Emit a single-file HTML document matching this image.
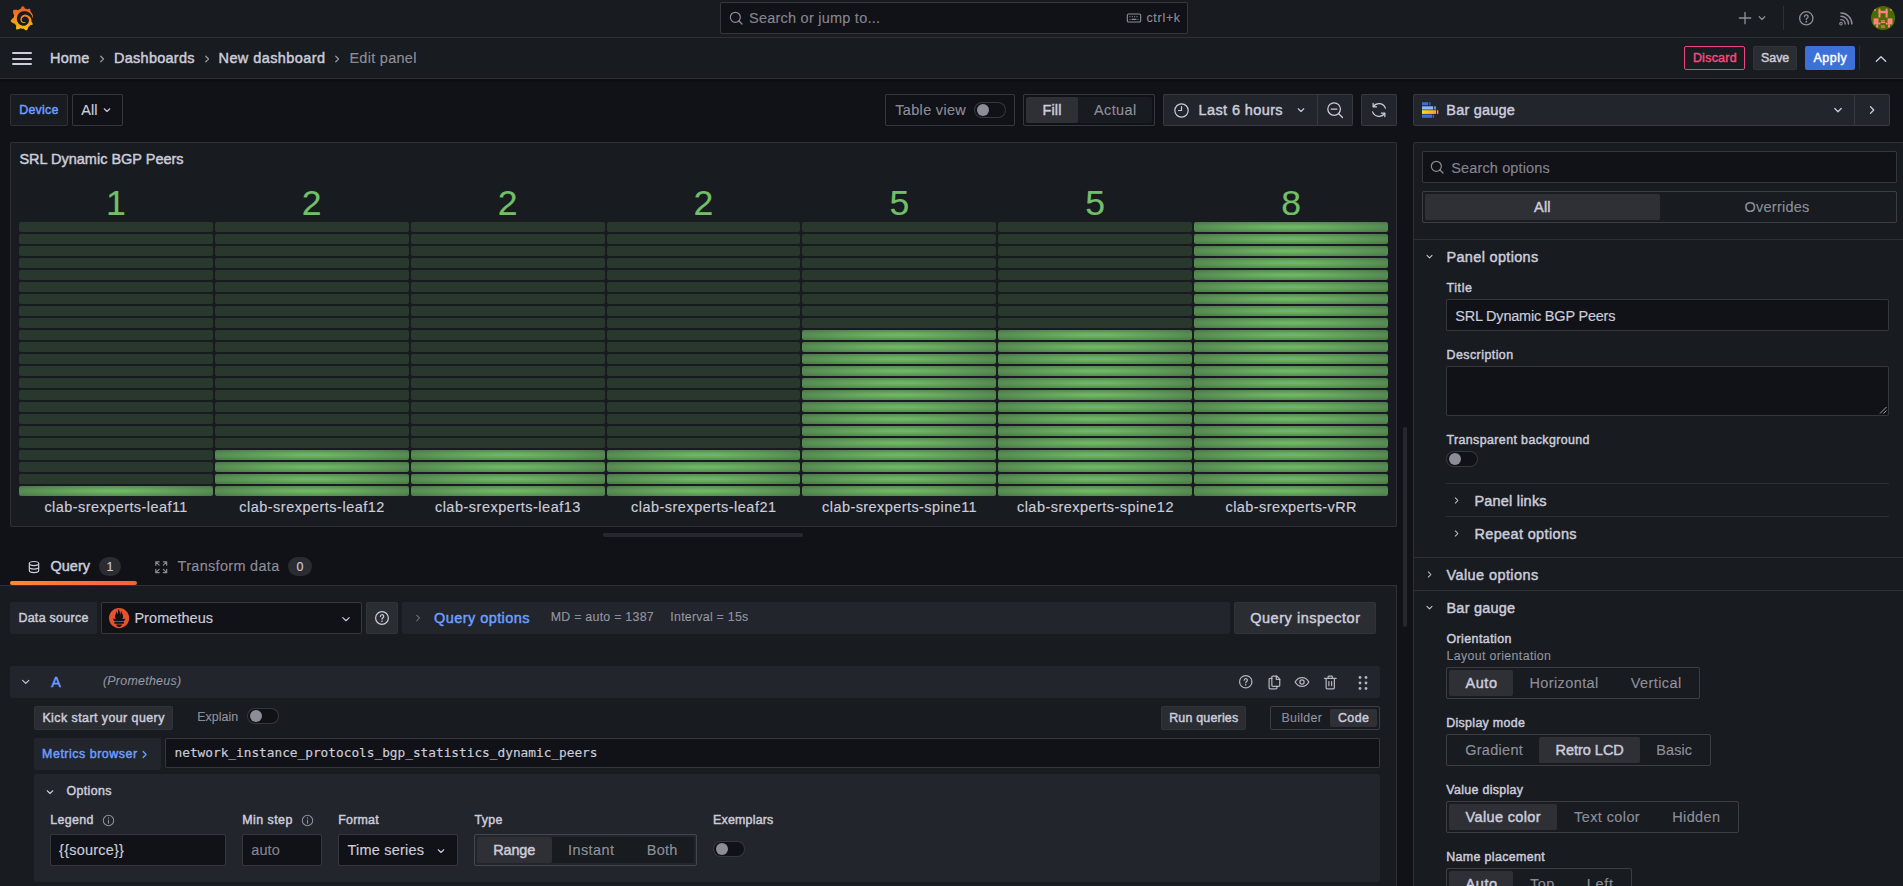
<!DOCTYPE html>
<html lang="en"><head><meta charset="utf-8"><title>Edit panel - New dashboard - Dashboards - Grafana</title><style>
html,body{margin:0;padding:0;background:#111217;overflow:hidden}
body{width:1903px;height:886px;position:relative;font-family:"Liberation Sans", sans-serif;color:rgb(204,204,220);-webkit-font-smoothing:antialiased}
.b{position:absolute;box-sizing:border-box}
.t{position:absolute;white-space:nowrap;line-height:20px;height:20px;display:block}
.i{position:absolute;display:block;overflow:visible}
.c{position:absolute;border-radius:2px}
</style></head><body>
<div class="b" style="left:0px;top:0px;width:1903px;height:38px;background:#181b1f;border-bottom:1px solid rgba(204,204,220,0.12);"></div>
<div class="b" style="left:0px;top:38px;width:1903px;height:41px;background:#181b1f;border-bottom:1px solid rgba(204,204,220,0.12);"></div>
<div class="b" style="left:0px;top:79px;width:1903px;height:4px;background:linear-gradient(rgba(0,0,0,0.35),rgba(0,0,0,0));"></div>
<svg class="i" style="left:10.1px;top:5.7px" width="23.66" height="24.6" viewBox="0 0 351 365"><defs><linearGradient id="gl" gradientUnits="userSpaceOnUse" x1="175" y1="30" x2="175" y2="375"><stop offset="0" stop-color="#F05A28"/><stop offset="1" stop-color="#FBCA0A"/></linearGradient></defs><path fill="url(#gl)" d="M342,161.2c-0.6-6.1-1.6-13.1-3.6-20.9c-2-7.700-5-16.200-9.400-25c-4.400-8.800-10.100-17.900-17.500-26.800c-2.900-3.500-6.100-6.900-9.500-10.200c5.100-20.300-6.200-37.900-6.200-37.900c-19.500-1.200-31.900,6.100-36.500,9.400c-0.800-0.300-1.500-0.700-2.300-1c-3.300-1.300-6.700-2.600-10.300-3.700c-3.500-1.100-7.100-2.100-10.800-3c-3.700-0.900-7.400-1.600-11.200-2.200c-0.700-0.100-1.300-0.200-2-0.300c-8.500-27.200-32.900-38.600-32.900-38.600c-27.300,17.300-32.400,41.500-32.400,41.500s-0.100,0.500-0.300,1.400c-1.500,0.400-3,0.900-4.500,1.300c-2.100,0.600-4.200,1.400-6.200,2.200c-2.100,0.800-4.100,1.600-6.200,2.500c-4.100,1.800-8.200,3.800-12.200,6c-3.900,2.200-7.700,4.600-11.400,7.100c-0.500-0.200-1-0.400-1-0.400c-37.800-14.400-71.300,2.900-71.300,2.900c-3.100,40.200,15.100,65.500,18.700,70.100c-0.900,2.500-1.700,5-2.500,7.500c-2.800,9.100-4.900,18.400-6.200,28.100c-0.200,1.400-0.400,2.800-0.500,4.200C18.800,192.700,8.500,228,8.500,228c29.100,33.500,63.100,35.600,63.100,35.600c0,0,0.100-0.100,0.100-0.100c4.300,7.700,9.300,15,14.900,21.900c2.400,2.900,4.800,5.600,7.400,8.300c-10.600,30.400,1.500,55.600,1.500,55.600c32.400,1.200,53.700-14.200,58.200-17.700c3.200,1.100,6.500,2.100,9.800,2.900c10,2.600,20.200,4.100,30.400,4.500c2.500,0.100,5.100,0.200,7.600,0.100l1.200,0l0.800,0l1.600,0l1.600-0.100l0,0.100c15.300,21.800,42.100,24.900,42.100,24.900c19.100-20.100,20.200-40.100,20.200-44.400l0,0c0,0,0-0.100,0-0.300c0-0.400,0-0.600,0-0.600l0,0c0-0.300,0-0.600,0-0.900c4-2.800,7.800-5.800,11.400-9.100c7.600-6.900,14.300-14.800,19.900-23.300c0.500-0.800,1-1.600,1.500-2.400c21.600,1.200,36.900-13.400,36.900-13.400c-3.600-22.500-16.400-33.500-19.100-35.600l0,0c0,0-0.100-0.100-0.300-0.200c-0.200-0.100-0.200-0.200-0.200-0.200c0,0,0,0,0,0c-0.100-0.100-0.300-0.200-0.500-0.300c0.100-1.400,0.200-2.700,0.300-4.100c0.200-2.400,0.200-4.900,0.200-7.300l0-1.800l0-0.900l0-0.500c0-0.600,0-0.400,0-0.600l-0.100-1.500l-0.100-2c0-0.700-0.100-1.300-0.200-1.900c-0.100-0.600-0.100-1.300-0.200-1.900l-0.200-1.900l-0.300-1.900c-0.400-2.500-0.800-4.900-1.400-7.400c-2.300-9.700-6.100-18.900-11-27.200c-5-8.300-11.200-15.600-18.300-21.800c-7-6.200-14.900-11.200-23.100-14.900c-8.300-3.700-16.900-6.100-25.500-7.200c-4.300-0.600-8.600-0.800-12.900-0.700l-1.600,0l-0.400,0c-0.100,0-0.600,0-0.500,0l-0.700,0l-1.600,0.100c-0.600,0-1.200,0.100-1.700,0.100c-2.200,0.200-4.400,0.500-6.500,0.900c-8.600,1.600-16.700,4.700-23.800,9c-7.100,4.300-13.300,9.600-18.300,15.600c-5,6-8.900,12.700-11.600,19.600c-2.700,6.900-4.200,14.100-4.600,21c-0.100,1.700-0.100,3.500-0.100,5.200c0,0.400,0,0.900,0,1.300l0.100,1.400c0.100,0.800,0.100,1.700,0.200,2.500c0.300,3.500,1,6.900,1.900,10.100c1.900,6.500,4.900,12.400,8.600,17.400c3.700,5,8.200,9.100,12.900,12.400c4.700,3.200,9.800,5.500,14.800,7c5,1.500,10,2.100,14.700,2.100c0.600,0,1.200,0,1.700,0c0.300,0,0.600,0,0.900,0c0.300,0,0.600,0,0.900-0.100c0.500,0,1-0.100,1.500-0.100c0.100,0,0.300,0,0.400-0.100l0.500-0.100c0.300,0,0.600-0.100,0.900-0.100c0.600-0.100,1.100-0.200,1.700-0.300c0.600-0.100,1.100-0.200,1.600-0.400c1.100-0.200,2.100-0.600,3.100-0.900c2-0.700,4-1.500,5.700-2.400c1.800-0.900,3.400-2,5-3c0.400-0.300,0.900-0.600,1.300-1c1.600-1.300,1.900-3.700,0.600-5.300c-1.100-1.400-3.100-1.800-4.700-0.900c-0.400,0.200-0.800,0.400-1.200,0.600c-1.400,0.700-2.800,1.300-4.300,1.800c-1.500,0.500-3.100,0.900-4.700,1.200c-0.800,0.100-1.600,0.200-2.500,0.300c-0.400,0-0.800,0.100-1.300,0.100c-0.400,0-0.900,0-1.200,0c-0.400,0-0.800,0-1.200,0c-0.500,0-1,0-1.500-0.100c0,0-0.300,0-0.100,0l-0.200,0l-0.300,0c-0.200,0-0.500,0-0.700-0.100c-0.500-0.100-0.900-0.100-1.400-0.200c-3.700-0.500-7.400-1.600-10.900-3.200c-3.600-1.600-7-3.800-10.100-6.600c-3.100-2.800-5.800-6.100-7.900-9.900c-2.100-3.800-3.600-8-4.300-12.400c-0.300-2.200-0.500-4.500-0.400-6.700c0-0.600,0.100-1.200,0.100-1.800c0,0.200,0-0.100,0-0.100l0-0.200l0-0.500c0-0.300,0.100-0.600,0.100-0.900c0.100-1.200,0.300-2.400,0.500-3.600c1.700-9.600,6.500-19,13.900-26.100c1.900-1.800,3.900-3.400,6-4.900c2.100-1.500,4.400-2.800,6.800-3.900c2.400-1.100,4.800-2,7.400-2.700c2.500-0.700,5.100-1.100,7.800-1.400c1.300-0.100,2.600-0.200,4-0.200c0.400,0,0.600,0,0.900,0l1.100,0l0.700,0c0.300,0,0,0,0.100,0l0.300,0l1.100,0.100c2.900,0.200,5.700,0.600,8.500,1.300c5.600,1.200,11.100,3.300,16.200,6.100c10.200,5.700,18.900,14.500,24.200,25.100c2.700,5.300,4.600,11,5.500,16.900c0.200,1.500,0.400,3,0.500,4.500l0.100,1.100l0.100,1.100c0,0.400,0,0.800,0,1.100c0,0.400,0,0.800,0,1.100l0,1l0,1.100c0,0.700-0.100,1.900-0.100,2.600c-0.100,1.600-0.300,3.300-0.500,4.900c-0.200,1.600-0.500,3.200-0.800,4.800c-0.300,1.600-0.700,3.200-1.100,4.700c-0.800,3.100-1.800,6.200-3,9.300c-2.400,6-5.600,11.800-9.400,17.100c-7.700,10.600-18.200,19.200-30.200,24.700c-6,2.700-12.300,4.700-18.800,5.700c-3.200,0.600-6.500,0.900-9.800,1l-0.600,0l-0.500,0l-1.100,0l-1.600,0l-0.800,0c0.400,0-0.100,0-0.100,0l-0.300,0c-1.800,0-3.500-0.100-5.300-0.300c-7-0.500-13.900-1.800-20.700-3.700c-6.700-1.900-13.200-4.600-19.400-7.800c-12.300-6.600-23.400-15.600-32-26.500c-4.300-5.400-8.100-11.300-11.200-17.400c-3.100-6.100-5.600-12.600-7.400-19.100c-1.800-6.600-2.900-13.300-3.400-20.100l-0.100-1.300l0-0.300l0-0.300l0-0.600l0-1.100l0-0.300l0-0.400l0-0.800l0-1.600l0-0.300c0,0,0,0.100,0-0.100l0-0.600c0-0.800,0-1.700,0-2.500c0.100-3.300,0.400-6.800,0.800-10.200c0.400-3.400,1-6.900,1.700-10.300c0.700-3.400,1.500-6.800,2.500-10.200c1.900-6.700,4.300-13.200,7.100-19.300c5.700-12.200,13.100-23.100,22-31.800c2.200-2.200,4.500-4.200,6.900-6.200c2.400-1.900,4.900-3.700,7.500-5.400c2.500-1.700,5.200-3.200,7.900-4.600c1.300-0.700,2.700-1.400,4.100-2c0.700-0.300,1.400-0.600,2.100-0.900c0.700-0.300,1.400-0.600,2.100-0.900c2.800-1.200,5.700-2.200,8.700-3.100c0.700-0.200,1.500-0.400,2.200-0.700c0.700-0.200,1.500-0.400,2.200-0.600c1.500-0.400,3-0.800,4.500-1.100c0.700-0.200,1.500-0.300,2.300-0.500c0.800-0.200,1.500-0.300,2.300-0.500c0.800-0.100,1.500-0.300,2.300-0.400l1.100-0.200l1.200-0.200c0.800-0.100,1.500-0.200,2.300-0.300c0.900-0.100,1.700-0.200,2.600-0.300c0.700-0.100,1.900-0.200,2.600-0.300c0.500-0.100,1.100-0.100,1.600-0.200l1.100-0.100l0.500-0.100l0.600,0c0.900-0.100,1.700-0.100,2.600-0.200l1.300-0.100c0,0,0.500,0,0.100,0l0.300,0l0.600,0c0.700,0,1.500-0.100,2.200-0.100c2.900-0.100,5.900-0.100,8.800,0c5.800,0.200,11.500,0.900,17,1.900c11.100,2.100,21.500,5.600,31,10.300c9.500,4.600,17.900,10.300,25.300,16.500c0.500,0.400,0.900,0.800,1.400,1.200c0.400,0.400,0.900,0.800,1.300,1.200c0.900,0.800,1.700,1.600,2.600,2.400c0.900,0.800,1.700,1.600,2.500,2.400c0.800,0.800,1.600,1.600,2.400,2.500c3.100,3.300,6,6.600,8.600,10c5.200,6.700,9.400,13.500,12.700,19.900c0.200,0.400,0.400,0.800,0.600,1.200c0.200,0.400,0.400,0.800,0.600,1.200c0.400,0.800,0.800,1.600,1.100,2.400c0.400,0.800,0.700,1.500,1.100,2.300c0.300,0.800,0.700,1.500,1,2.300c1.200,3,2.400,5.900,3.300,8.600c1.500,4.400,2.600,8.300,3.500,11.700c0.300,1.400,1.600,2.300,3,2.100c1.500-0.100,2.600-1.300,2.600-2.800C342.600,170.400,342.500,166.100,342,161.200z"/></svg>
<div class="b" style="left:720px;top:2px;width:468px;height:32px;background:#111217;border:1px solid rgba(204,204,220,0.20);border-radius:2px;"></div>
<svg class="i" style="left:728px;top:10px" width="16" height="16" viewBox="0 0 24 24" fill="none" stroke="rgba(204,204,220,0.65)" stroke-width="1.8" stroke-linecap="round" stroke-linejoin="round"><circle cx="11" cy="11" r="7.5"/><path d="M16.5 16.5L21 21"/></svg>
<span class="t" id="t0" style="left:749px;top:8px;font-size:14.49px;color:rgba(204,204,220,0.6);letter-spacing:0.242px;-webkit-text-stroke:0.15px rgba(204,204,220,0.6);">Search or jump to...</span>
<svg class="i" style="left:1126px;top:10px" width="16" height="16" viewBox="0 0 24 24" fill="none" stroke="rgba(204,204,220,0.65)" stroke-width="1.7" stroke-linecap="round" stroke-linejoin="round"><rect x="2" y="6" width="20" height="12" rx="2"/><path d="M6 10h.01M9.5 10h.01M13 10h.01M16.5 10h.01M6 14h.01M18 14h.01M9 14h6" /></svg>
<span class="t" id="t1" style="left:1146.4px;top:7.5px;font-size:12.42px;color:rgba(204,204,220,0.65);letter-spacing:0.740px;-webkit-text-stroke:0.15px rgba(204,204,220,0.65);">ctrl+k</span>
<svg class="i" style="left:1737px;top:10px" width="16" height="16" viewBox="0 0 24 24" fill="none" stroke="rgba(204,204,220,0.65)" stroke-width="2" stroke-linecap="round" stroke-linejoin="round"><path d="M12 3.5v17M3.5 12h17"/></svg>
<svg class="i" style="left:1756px;top:11.8px" width="12" height="12" viewBox="0 0 24 24" fill="none" stroke="rgba(204,204,220,0.65)" stroke-width="2.4" stroke-linecap="round" stroke-linejoin="round"><path d="M6.5 9.5L12 15l5.5-5.5"/></svg>
<div class="b" style="left:1783px;top:6px;width:1px;height:24px;background:rgba(204,204,220,0.12);"></div>
<svg class="i" style="left:1797.9px;top:9.7px" width="16.6" height="16.6" viewBox="0 0 24 24" fill="none" stroke="rgba(204,204,220,0.65)" stroke-width="1.9" stroke-linecap="round" stroke-linejoin="round"><circle cx="12" cy="12" r="9.6"/><path d="M9.4 9.6a2.6 2.6 0 1 1 3.8 2.300c-.8.4-1.200 1-1.200 1.900"/><path d="M12 17h.01" stroke-width="2.600"/></svg>
<svg class="i" style="left:1837.65px;top:10.65px" width="15.5" height="15.5" viewBox="0 0 24 24" fill="none" stroke="rgba(204,204,220,0.65)" stroke-width="2.2" stroke-linecap="round" stroke-linejoin="round"><path d="M4.500 3C13.900 3 21.500 10.600 21.500 20"/><path d="M4.500 8.200C11 8.200 16.300 13.500 16.300 20"/><path d="M4.500 13.400c3.600 0 6.600 3 6.600 6.600"/><circle cx="4.600" cy="19.600" r="2" stroke-width="1.600"/></svg>
<svg class="i" style="left:1871px;top:6px" width="24" height="24" viewBox="0 0 24 24"><defs><clipPath id="av"><circle cx="12.05" cy="12" r="12.1"/></clipPath></defs><g clip-path="url(#av)"><rect x="-1" y="-1" width="26" height="26" fill="#476b05"/><g fill="#ff857a"><rect x="2.9" y="2.4" width="1.9" height="2.4"/><rect x="19.3" y="2.4" width="1.9" height="2.4"/><rect x="7.5" y="2.6" width="2" height="9"/><rect x="14.6" y="2.6" width="2" height="9"/><rect x="7.5" y="4.8" width="9.1" height="2.4"/><rect x="2.6" y="12.4" width="4.9" height="6.1"/><rect x="16.6" y="12.4" width="4.9" height="6.1"/><rect x="7.5" y="16.6" width="1.9" height="1.9"/><rect x="14.7" y="16.6" width="1.9" height="1.9"/><rect x="5.1" y="18.5" width="2.1" height="3"/><rect x="16.9" y="18.5" width="2.1" height="3"/><rect x="9.85" y="14.3" width="4.2" height="1.2"/><rect x="9.85" y="15.9" width="4.2" height="1.2"/><rect x="9.85" y="19.5" width="4.2" height="0.9"/><rect x="9.85" y="20.7" width="4.2" height="0.9"/></g></g></svg>
<div class="b" style="left:12px;top:52px;width:20px;height:2px;background:rgb(204,204,220);border-radius:1px;"></div>
<div class="b" style="left:12px;top:57.5px;width:20px;height:2px;background:rgb(204,204,220);border-radius:1px;"></div>
<div class="b" style="left:12px;top:63px;width:20px;height:2px;background:rgb(204,204,220);border-radius:1px;"></div>
<span class="t" id="t2" style="left:50px;top:48px;font-size:14.49px;color:rgb(204,204,220);letter-spacing:0.220px;-webkit-text-stroke:0.45px rgb(204,204,220);">Home</span>
<svg class="i" style="left:95.7px;top:52.5px" width="12" height="12" viewBox="0 0 24 24" fill="none" stroke="rgba(204,204,220,0.7)" stroke-width="2.5" stroke-linecap="round" stroke-linejoin="round"><path d="M9.5 6.5L15 12l-5.5 5.5"/></svg>
<span class="t" id="t3" style="left:114px;top:48px;font-size:14.49px;color:rgb(204,204,220);letter-spacing:0.266px;-webkit-text-stroke:0.45px rgb(204,204,220);">Dashboards</span>
<svg class="i" style="left:200.8px;top:52.5px" width="12" height="12" viewBox="0 0 24 24" fill="none" stroke="rgba(204,204,220,0.7)" stroke-width="2.5" stroke-linecap="round" stroke-linejoin="round"><path d="M9.5 6.5L15 12l-5.5 5.5"/></svg>
<span class="t" id="t4" style="left:218.5px;top:48px;font-size:14.49px;color:rgb(204,204,220);letter-spacing:0.419px;-webkit-text-stroke:0.45px rgb(204,204,220);">New dashboard</span>
<svg class="i" style="left:330.8px;top:52.5px" width="12" height="12" viewBox="0 0 24 24" fill="none" stroke="rgba(204,204,220,0.7)" stroke-width="2.5" stroke-linecap="round" stroke-linejoin="round"><path d="M9.5 6.5L15 12l-5.5 5.5"/></svg>
<span class="t" id="t5" style="left:349.4px;top:48px;font-size:14.49px;color:rgba(204,204,220,0.65);letter-spacing:0.285px;-webkit-text-stroke:0.15px rgba(204,204,220,0.65);">Edit panel</span>
<div class="b" style="left:1684px;top:46px;width:61px;height:24px;border:1px solid #ee447d;border-radius:2px;"></div>
<span class="t" id="t6" style="left:1692.9px;top:48px;font-size:12.42px;color:#f8497f;letter-spacing:0.273px;-webkit-text-stroke:0.45px #f8497f;">Discard</span>
<div class="b" style="left:1753px;top:46px;width:44px;height:24px;background:rgba(204,204,220,0.10);border:1px solid rgba(204,204,220,0.05);border-radius:2px;"></div>
<span class="t" id="t7" style="left:1761.1px;top:48px;font-size:12.42px;color:rgb(204,204,220);letter-spacing:-0.060px;-webkit-text-stroke:0.45px rgb(204,204,220);">Save</span>
<div class="b" style="left:1805px;top:46px;width:50px;height:24px;background:#3d71d9;border-radius:2px;"></div>
<span class="t" id="t8" style="left:1813.6px;top:48px;font-size:12.42px;color:#ffffff;letter-spacing:0.488px;-webkit-text-stroke:0.45px #ffffff;">Apply</span>
<div class="b" style="left:1859px;top:46px;width:1px;height:24px;background:rgba(204,204,220,0.12);"></div>
<svg class="i" style="left:1873px;top:51px" width="16" height="16" viewBox="0 0 24 24" fill="none" stroke="rgb(204,204,220)" stroke-width="2" stroke-linecap="round" stroke-linejoin="round"><path d="M5 15.5L12 8.5l7 7"/></svg>
<div class="b" style="left:10px;top:94px;width:58px;height:32px;background:#181b1f;border:1px solid rgba(204,204,220,0.12);border-radius:2px;"></div>
<span class="t" id="t9" style="left:19.2px;top:100px;font-size:12.42px;color:#6e9fff;letter-spacing:0.276px;-webkit-text-stroke:0.45px #6e9fff;">Device</span>
<div class="b" style="left:72px;top:94px;width:51px;height:32px;background:#111217;border:1px solid rgba(204,204,220,0.20);border-radius:2px;"></div>
<span class="t" id="t10" style="left:81.2px;top:100px;font-size:14.49px;color:rgb(204,204,220);letter-spacing:0.045px;-webkit-text-stroke:0.15px rgb(204,204,220);">All</span>
<svg class="i" style="left:101px;top:103.8px" width="12" height="12" viewBox="0 0 24 24" fill="none" stroke="rgb(204,204,220)" stroke-width="2.2" stroke-linecap="round" stroke-linejoin="round"><path d="M6.5 9.5L12 15l5.5-5.5"/></svg>
<div class="b" style="left:885px;top:94px;width:130px;height:32px;background:#111217;border:1px solid rgba(204,204,220,0.20);border-radius:2px;"></div>
<span class="t" id="t11" style="left:895.3px;top:100px;font-size:14.49px;color:rgba(204,204,220,0.65);letter-spacing:0.318px;-webkit-text-stroke:0.15px rgba(204,204,220,0.65);">Table view</span>
<div class="b" style="left:974px;top:102px;width:32px;height:16px;background:#111217;border:1px solid rgba(204,204,220,0.20);border-radius:8px;"></div>
<div class="b" style="left:977px;top:104px;width:12px;height:12px;background:rgb(141,141,153);border-radius:6px;"></div>
<div class="b" style="left:1023px;top:94px;width:132px;height:32px;border:1px solid rgba(204,204,220,0.20);border-radius:2px;"></div>
<div class="b" style="left:1026px;top:97px;width:126px;height:26px;background:#181b1f;border-radius:2px;"></div>
<div class="b" style="left:1026px;top:97px;width:52px;height:26px;background:rgba(204,204,220,0.12);border-radius:2px;"></div>
<span class="t" id="t12" style="left:1042.6px;top:100px;font-size:14.49px;color:rgb(204,204,220);letter-spacing:0.095px;-webkit-text-stroke:0.45px rgb(204,204,220);">Fill</span>
<span class="t" id="t13" style="left:1093.9px;top:100px;font-size:14.49px;color:rgba(204,204,220,0.65);letter-spacing:0.427px;-webkit-text-stroke:0.15px rgba(204,204,220,0.65);">Actual</span>
<div class="b" style="left:1163px;top:94px;width:190px;height:32px;background:#22252b;border:1px solid rgba(204,204,220,0.12);border-radius:2px;"></div>
<div class="b" style="left:1317px;top:95px;width:1px;height:30px;background:rgba(204,204,220,0.12);"></div>
<svg class="i" style="left:1172.5px;top:101.5px" width="17" height="17" viewBox="0 0 24 24" fill="none" stroke="rgb(204,204,220)" stroke-width="1.7" stroke-linecap="round" stroke-linejoin="round"><circle cx="12" cy="12" r="9.4"/><path d="M12 6.5V12H7.8"/></svg>
<span class="t" id="t14" style="left:1198.6px;top:100px;font-size:14.49px;color:rgb(204,204,220);letter-spacing:0.389px;-webkit-text-stroke:0.45px rgb(204,204,220);">Last 6 hours</span>
<svg class="i" style="left:1295px;top:103.8px" width="12" height="12" viewBox="0 0 24 24" fill="none" stroke="rgb(204,204,220)" stroke-width="2.2" stroke-linecap="round" stroke-linejoin="round"><path d="M6.5 9.5L12 15l5.5-5.5"/></svg>
<svg class="i" style="left:1326px;top:101px" width="18" height="18" viewBox="0 0 24 24" fill="none" stroke="rgb(204,204,220)" stroke-width="1.7" stroke-linecap="round" stroke-linejoin="round"><circle cx="10.8" cy="10.8" r="8.4"/><path d="M17 17l5 5M7 10.8h7.6"/></svg>
<div class="b" style="left:1361px;top:94px;width:36px;height:32px;background:#22252b;border:1px solid rgba(204,204,220,0.12);border-radius:2px;"></div>
<svg class="i" style="left:1369.8px;top:101px" width="18" height="18" viewBox="0 0 24 24" fill="none" stroke="rgb(204,204,220)" stroke-width="1.7" stroke-linecap="round" stroke-linejoin="round"><path d="M20.5 9.5A9 9 0 0 0 4.6 7.4"/><path d="M3.5 14.5a9 9 0 0 0 15.9 2.1"/><path d="M4.2 3.2v4.6h4.6M19.8 20.8v-4.6h-4.6"/></svg>
<div class="b" style="left:1413px;top:94px;width:477px;height:32px;background:#22252b;border:1px solid rgba(204,204,220,0.12);border-radius:2px;"></div>
<div class="b" style="left:1854px;top:95px;width:1px;height:30px;background:rgba(204,204,220,0.12);"></div>
<svg class="i" style="left:1421.9px;top:102px" width="16.5" height="16" viewBox="0 0 16.5 16"><defs><linearGradient id="bgy" x1="0" x2="1" y1="0" y2="0"><stop offset="0" stop-color="#fade2a"/><stop offset="1" stop-color="#ff9830"/></linearGradient></defs><rect x="0" y="0.2" width="6.2" height="3.1" fill="#3b6fcf"/><rect x="7.1" y="0.2" width="1.4" height="3.1" fill="#3667bd"/><rect x="0" y="4.3" width="11.2" height="3.3" fill="#8ab8ff"/><rect x="12" y="4.3" width="2.1" height="3.3" fill="#5f88c8"/><rect x="0" y="8.2" width="14.1" height="3.7" fill="url(#bgy)"/><rect x="15" y="8.2" width="1.3" height="3.7" fill="#ff9830"/><rect x="0" y="12.5" width="10.1" height="3.3" fill="#3b6fcf"/><rect x="10.7" y="12.5" width="1.4" height="3.3" fill="#3667bd"/></svg>
<span class="t" id="t15" style="left:1446.3px;top:100px;font-size:14.49px;color:rgb(204,204,220);letter-spacing:0.220px;-webkit-text-stroke:0.45px rgb(204,204,220);">Bar gauge</span>
<svg class="i" style="left:1830.8px;top:102.8px" width="14" height="14" viewBox="0 0 24 24" fill="none" stroke="rgb(204,204,220)" stroke-width="2.2" stroke-linecap="round" stroke-linejoin="round"><path d="M6.5 9.5L12 15l5.5-5.5"/></svg>
<svg class="i" style="left:1864.6px;top:103px" width="14" height="14" viewBox="0 0 24 24" fill="none" stroke="rgb(204,204,220)" stroke-width="2.2" stroke-linecap="round" stroke-linejoin="round"><path d="M9.5 6.5L15 12l-5.5 5.5"/></svg>
<div class="b" style="left:10px;top:142px;width:1387px;height:385px;background:#181b1f;border:1px solid rgba(204,204,220,0.12);border-radius:2px;"></div>
<span class="t" id="t16" style="left:19.4px;top:149.2px;font-size:14.49px;color:rgb(204,204,220);letter-spacing:-0.001px;-webkit-text-stroke:0.45px rgb(204,204,220);">SRL Dynamic BGP Peers</span>
<span class="t" id="t17" style="left:106.01px;top:192.6px;font-size:35.64px;color:#73bf69;letter-spacing:1.426px;-webkit-text-stroke:0.15px #73bf69;">1</span>
<div class="c" style="left:19px;top:222px;width:194px;height:10px;background:rgba(115,191,105,0.18)"></div><div class="c" style="left:19px;top:234px;width:194px;height:10px;background:rgba(115,191,105,0.18)"></div><div class="c" style="left:19px;top:246px;width:194px;height:10px;background:rgba(115,191,105,0.18)"></div><div class="c" style="left:19px;top:258px;width:194px;height:10px;background:rgba(115,191,105,0.18)"></div><div class="c" style="left:19px;top:270px;width:194px;height:10px;background:rgba(115,191,105,0.18)"></div><div class="c" style="left:19px;top:282px;width:194px;height:10px;background:rgba(115,191,105,0.18)"></div><div class="c" style="left:19px;top:294px;width:194px;height:10px;background:rgba(115,191,105,0.18)"></div><div class="c" style="left:19px;top:306px;width:194px;height:10px;background:rgba(115,191,105,0.18)"></div><div class="c" style="left:19px;top:318px;width:194px;height:10px;background:rgba(115,191,105,0.18)"></div><div class="c" style="left:19px;top:330px;width:194px;height:10px;background:rgba(115,191,105,0.18)"></div><div class="c" style="left:19px;top:342px;width:194px;height:10px;background:rgba(115,191,105,0.18)"></div><div class="c" style="left:19px;top:354px;width:194px;height:10px;background:rgba(115,191,105,0.18)"></div><div class="c" style="left:19px;top:366px;width:194px;height:10px;background:rgba(115,191,105,0.18)"></div><div class="c" style="left:19px;top:378px;width:194px;height:10px;background:rgba(115,191,105,0.18)"></div><div class="c" style="left:19px;top:390px;width:194px;height:10px;background:rgba(115,191,105,0.18)"></div><div class="c" style="left:19px;top:402px;width:194px;height:10px;background:rgba(115,191,105,0.18)"></div><div class="c" style="left:19px;top:414px;width:194px;height:10px;background:rgba(115,191,105,0.18)"></div><div class="c" style="left:19px;top:426px;width:194px;height:10px;background:rgba(115,191,105,0.18)"></div><div class="c" style="left:19px;top:438px;width:194px;height:10px;background:rgba(115,191,105,0.18)"></div><div class="c" style="left:19px;top:450px;width:194px;height:10px;background:rgba(115,191,105,0.18)"></div><div class="c" style="left:19px;top:462px;width:194px;height:10px;background:rgba(115,191,105,0.18)"></div><div class="c" style="left:19px;top:474px;width:194px;height:10px;background:rgba(115,191,105,0.18)"></div><div class="c" style="left:19px;top:486px;width:194px;height:10px;background:radial-gradient(rgba(115,191,105,0.95) 10%,rgba(115,191,105,0.55))"></div>
<span class="t" id="t18" style="left:44.43px;top:497px;font-size:14.49px;color:rgb(204,204,220);letter-spacing:0.441px;-webkit-text-stroke:0.15px rgb(204,204,220);">clab-srexperts-leaf11</span>
<span class="t" id="t19" style="left:301.87px;top:192.6px;font-size:35.64px;color:#73bf69;letter-spacing:1.426px;-webkit-text-stroke:0.15px #73bf69;">2</span>
<div class="c" style="left:215px;top:222px;width:194px;height:10px;background:rgba(115,191,105,0.18)"></div><div class="c" style="left:215px;top:234px;width:194px;height:10px;background:rgba(115,191,105,0.18)"></div><div class="c" style="left:215px;top:246px;width:194px;height:10px;background:rgba(115,191,105,0.18)"></div><div class="c" style="left:215px;top:258px;width:194px;height:10px;background:rgba(115,191,105,0.18)"></div><div class="c" style="left:215px;top:270px;width:194px;height:10px;background:rgba(115,191,105,0.18)"></div><div class="c" style="left:215px;top:282px;width:194px;height:10px;background:rgba(115,191,105,0.18)"></div><div class="c" style="left:215px;top:294px;width:194px;height:10px;background:rgba(115,191,105,0.18)"></div><div class="c" style="left:215px;top:306px;width:194px;height:10px;background:rgba(115,191,105,0.18)"></div><div class="c" style="left:215px;top:318px;width:194px;height:10px;background:rgba(115,191,105,0.18)"></div><div class="c" style="left:215px;top:330px;width:194px;height:10px;background:rgba(115,191,105,0.18)"></div><div class="c" style="left:215px;top:342px;width:194px;height:10px;background:rgba(115,191,105,0.18)"></div><div class="c" style="left:215px;top:354px;width:194px;height:10px;background:rgba(115,191,105,0.18)"></div><div class="c" style="left:215px;top:366px;width:194px;height:10px;background:rgba(115,191,105,0.18)"></div><div class="c" style="left:215px;top:378px;width:194px;height:10px;background:rgba(115,191,105,0.18)"></div><div class="c" style="left:215px;top:390px;width:194px;height:10px;background:rgba(115,191,105,0.18)"></div><div class="c" style="left:215px;top:402px;width:194px;height:10px;background:rgba(115,191,105,0.18)"></div><div class="c" style="left:215px;top:414px;width:194px;height:10px;background:rgba(115,191,105,0.18)"></div><div class="c" style="left:215px;top:426px;width:194px;height:10px;background:rgba(115,191,105,0.18)"></div><div class="c" style="left:215px;top:438px;width:194px;height:10px;background:rgba(115,191,105,0.18)"></div><div class="c" style="left:215px;top:450px;width:194px;height:10px;background:radial-gradient(rgba(115,191,105,0.95) 10%,rgba(115,191,105,0.55))"></div><div class="c" style="left:215px;top:462px;width:194px;height:10px;background:radial-gradient(rgba(115,191,105,0.95) 10%,rgba(115,191,105,0.55))"></div><div class="c" style="left:215px;top:474px;width:194px;height:10px;background:radial-gradient(rgba(115,191,105,0.95) 10%,rgba(115,191,105,0.55))"></div><div class="c" style="left:215px;top:486px;width:194px;height:10px;background:radial-gradient(rgba(115,191,105,0.95) 10%,rgba(115,191,105,0.55))"></div>
<span class="t" id="t20" style="left:239.19px;top:497px;font-size:14.49px;color:rgb(204,204,220);letter-spacing:0.497px;-webkit-text-stroke:0.15px rgb(204,204,220);">clab-srexperts-leaf12</span>
<span class="t" id="t21" style="left:497.73px;top:192.6px;font-size:35.64px;color:#73bf69;letter-spacing:1.426px;-webkit-text-stroke:0.15px #73bf69;">2</span>
<div class="c" style="left:411px;top:222px;width:194px;height:10px;background:rgba(115,191,105,0.18)"></div><div class="c" style="left:411px;top:234px;width:194px;height:10px;background:rgba(115,191,105,0.18)"></div><div class="c" style="left:411px;top:246px;width:194px;height:10px;background:rgba(115,191,105,0.18)"></div><div class="c" style="left:411px;top:258px;width:194px;height:10px;background:rgba(115,191,105,0.18)"></div><div class="c" style="left:411px;top:270px;width:194px;height:10px;background:rgba(115,191,105,0.18)"></div><div class="c" style="left:411px;top:282px;width:194px;height:10px;background:rgba(115,191,105,0.18)"></div><div class="c" style="left:411px;top:294px;width:194px;height:10px;background:rgba(115,191,105,0.18)"></div><div class="c" style="left:411px;top:306px;width:194px;height:10px;background:rgba(115,191,105,0.18)"></div><div class="c" style="left:411px;top:318px;width:194px;height:10px;background:rgba(115,191,105,0.18)"></div><div class="c" style="left:411px;top:330px;width:194px;height:10px;background:rgba(115,191,105,0.18)"></div><div class="c" style="left:411px;top:342px;width:194px;height:10px;background:rgba(115,191,105,0.18)"></div><div class="c" style="left:411px;top:354px;width:194px;height:10px;background:rgba(115,191,105,0.18)"></div><div class="c" style="left:411px;top:366px;width:194px;height:10px;background:rgba(115,191,105,0.18)"></div><div class="c" style="left:411px;top:378px;width:194px;height:10px;background:rgba(115,191,105,0.18)"></div><div class="c" style="left:411px;top:390px;width:194px;height:10px;background:rgba(115,191,105,0.18)"></div><div class="c" style="left:411px;top:402px;width:194px;height:10px;background:rgba(115,191,105,0.18)"></div><div class="c" style="left:411px;top:414px;width:194px;height:10px;background:rgba(115,191,105,0.18)"></div><div class="c" style="left:411px;top:426px;width:194px;height:10px;background:rgba(115,191,105,0.18)"></div><div class="c" style="left:411px;top:438px;width:194px;height:10px;background:rgba(115,191,105,0.18)"></div><div class="c" style="left:411px;top:450px;width:194px;height:10px;background:radial-gradient(rgba(115,191,105,0.95) 10%,rgba(115,191,105,0.55))"></div><div class="c" style="left:411px;top:462px;width:194px;height:10px;background:radial-gradient(rgba(115,191,105,0.95) 10%,rgba(115,191,105,0.55))"></div><div class="c" style="left:411px;top:474px;width:194px;height:10px;background:radial-gradient(rgba(115,191,105,0.95) 10%,rgba(115,191,105,0.55))"></div><div class="c" style="left:411px;top:486px;width:194px;height:10px;background:radial-gradient(rgba(115,191,105,0.95) 10%,rgba(115,191,105,0.55))"></div>
<span class="t" id="t22" style="left:434.89px;top:497px;font-size:14.49px;color:rgb(204,204,220);letter-spacing:0.512px;-webkit-text-stroke:0.15px rgb(204,204,220);">clab-srexperts-leaf13</span>
<span class="t" id="t23" style="left:693.59px;top:192.6px;font-size:35.64px;color:#73bf69;letter-spacing:1.426px;-webkit-text-stroke:0.15px #73bf69;">2</span>
<div class="c" style="left:607px;top:222px;width:193px;height:10px;background:rgba(115,191,105,0.18)"></div><div class="c" style="left:607px;top:234px;width:193px;height:10px;background:rgba(115,191,105,0.18)"></div><div class="c" style="left:607px;top:246px;width:193px;height:10px;background:rgba(115,191,105,0.18)"></div><div class="c" style="left:607px;top:258px;width:193px;height:10px;background:rgba(115,191,105,0.18)"></div><div class="c" style="left:607px;top:270px;width:193px;height:10px;background:rgba(115,191,105,0.18)"></div><div class="c" style="left:607px;top:282px;width:193px;height:10px;background:rgba(115,191,105,0.18)"></div><div class="c" style="left:607px;top:294px;width:193px;height:10px;background:rgba(115,191,105,0.18)"></div><div class="c" style="left:607px;top:306px;width:193px;height:10px;background:rgba(115,191,105,0.18)"></div><div class="c" style="left:607px;top:318px;width:193px;height:10px;background:rgba(115,191,105,0.18)"></div><div class="c" style="left:607px;top:330px;width:193px;height:10px;background:rgba(115,191,105,0.18)"></div><div class="c" style="left:607px;top:342px;width:193px;height:10px;background:rgba(115,191,105,0.18)"></div><div class="c" style="left:607px;top:354px;width:193px;height:10px;background:rgba(115,191,105,0.18)"></div><div class="c" style="left:607px;top:366px;width:193px;height:10px;background:rgba(115,191,105,0.18)"></div><div class="c" style="left:607px;top:378px;width:193px;height:10px;background:rgba(115,191,105,0.18)"></div><div class="c" style="left:607px;top:390px;width:193px;height:10px;background:rgba(115,191,105,0.18)"></div><div class="c" style="left:607px;top:402px;width:193px;height:10px;background:rgba(115,191,105,0.18)"></div><div class="c" style="left:607px;top:414px;width:193px;height:10px;background:rgba(115,191,105,0.18)"></div><div class="c" style="left:607px;top:426px;width:193px;height:10px;background:rgba(115,191,105,0.18)"></div><div class="c" style="left:607px;top:438px;width:193px;height:10px;background:rgba(115,191,105,0.18)"></div><div class="c" style="left:607px;top:450px;width:193px;height:10px;background:radial-gradient(rgba(115,191,105,0.95) 10%,rgba(115,191,105,0.55))"></div><div class="c" style="left:607px;top:462px;width:193px;height:10px;background:radial-gradient(rgba(115,191,105,0.95) 10%,rgba(115,191,105,0.55))"></div><div class="c" style="left:607px;top:474px;width:193px;height:10px;background:radial-gradient(rgba(115,191,105,0.95) 10%,rgba(115,191,105,0.55))"></div><div class="c" style="left:607px;top:486px;width:193px;height:10px;background:radial-gradient(rgba(115,191,105,0.95) 10%,rgba(115,191,105,0.55))"></div>
<span class="t" id="t24" style="left:631px;top:497px;font-size:14.49px;color:rgb(204,204,220);letter-spacing:0.487px;-webkit-text-stroke:0.15px rgb(204,204,220);">clab-srexperts-leaf21</span>
<span class="t" id="t25" style="left:889.44px;top:192.6px;font-size:35.64px;color:#73bf69;letter-spacing:1.426px;-webkit-text-stroke:0.15px #73bf69;">5</span>
<div class="c" style="left:802px;top:222px;width:194px;height:10px;background:rgba(115,191,105,0.18)"></div><div class="c" style="left:802px;top:234px;width:194px;height:10px;background:rgba(115,191,105,0.18)"></div><div class="c" style="left:802px;top:246px;width:194px;height:10px;background:rgba(115,191,105,0.18)"></div><div class="c" style="left:802px;top:258px;width:194px;height:10px;background:rgba(115,191,105,0.18)"></div><div class="c" style="left:802px;top:270px;width:194px;height:10px;background:rgba(115,191,105,0.18)"></div><div class="c" style="left:802px;top:282px;width:194px;height:10px;background:rgba(115,191,105,0.18)"></div><div class="c" style="left:802px;top:294px;width:194px;height:10px;background:rgba(115,191,105,0.18)"></div><div class="c" style="left:802px;top:306px;width:194px;height:10px;background:rgba(115,191,105,0.18)"></div><div class="c" style="left:802px;top:318px;width:194px;height:10px;background:rgba(115,191,105,0.18)"></div><div class="c" style="left:802px;top:330px;width:194px;height:10px;background:radial-gradient(rgba(115,191,105,0.95) 10%,rgba(115,191,105,0.55))"></div><div class="c" style="left:802px;top:342px;width:194px;height:10px;background:radial-gradient(rgba(115,191,105,0.95) 10%,rgba(115,191,105,0.55))"></div><div class="c" style="left:802px;top:354px;width:194px;height:10px;background:radial-gradient(rgba(115,191,105,0.95) 10%,rgba(115,191,105,0.55))"></div><div class="c" style="left:802px;top:366px;width:194px;height:10px;background:radial-gradient(rgba(115,191,105,0.95) 10%,rgba(115,191,105,0.55))"></div><div class="c" style="left:802px;top:378px;width:194px;height:10px;background:radial-gradient(rgba(115,191,105,0.95) 10%,rgba(115,191,105,0.55))"></div><div class="c" style="left:802px;top:390px;width:194px;height:10px;background:radial-gradient(rgba(115,191,105,0.95) 10%,rgba(115,191,105,0.55))"></div><div class="c" style="left:802px;top:402px;width:194px;height:10px;background:radial-gradient(rgba(115,191,105,0.95) 10%,rgba(115,191,105,0.55))"></div><div class="c" style="left:802px;top:414px;width:194px;height:10px;background:radial-gradient(rgba(115,191,105,0.95) 10%,rgba(115,191,105,0.55))"></div><div class="c" style="left:802px;top:426px;width:194px;height:10px;background:radial-gradient(rgba(115,191,105,0.95) 10%,rgba(115,191,105,0.55))"></div><div class="c" style="left:802px;top:438px;width:194px;height:10px;background:radial-gradient(rgba(115,191,105,0.95) 10%,rgba(115,191,105,0.55))"></div><div class="c" style="left:802px;top:450px;width:194px;height:10px;background:radial-gradient(rgba(115,191,105,0.95) 10%,rgba(115,191,105,0.55))"></div><div class="c" style="left:802px;top:462px;width:194px;height:10px;background:radial-gradient(rgba(115,191,105,0.95) 10%,rgba(115,191,105,0.55))"></div><div class="c" style="left:802px;top:474px;width:194px;height:10px;background:radial-gradient(rgba(115,191,105,0.95) 10%,rgba(115,191,105,0.55))"></div><div class="c" style="left:802px;top:486px;width:194px;height:10px;background:radial-gradient(rgba(115,191,105,0.95) 10%,rgba(115,191,105,0.55))"></div>
<span class="t" id="t26" style="left:822.11px;top:497px;font-size:14.49px;color:rgb(204,204,220);letter-spacing:0.431px;-webkit-text-stroke:0.15px rgb(204,204,220);">clab-srexperts-spine11</span>
<span class="t" id="t27" style="left:1085.3px;top:192.6px;font-size:35.64px;color:#73bf69;letter-spacing:1.426px;-webkit-text-stroke:0.15px #73bf69;">5</span>
<div class="c" style="left:998px;top:222px;width:194px;height:10px;background:rgba(115,191,105,0.18)"></div><div class="c" style="left:998px;top:234px;width:194px;height:10px;background:rgba(115,191,105,0.18)"></div><div class="c" style="left:998px;top:246px;width:194px;height:10px;background:rgba(115,191,105,0.18)"></div><div class="c" style="left:998px;top:258px;width:194px;height:10px;background:rgba(115,191,105,0.18)"></div><div class="c" style="left:998px;top:270px;width:194px;height:10px;background:rgba(115,191,105,0.18)"></div><div class="c" style="left:998px;top:282px;width:194px;height:10px;background:rgba(115,191,105,0.18)"></div><div class="c" style="left:998px;top:294px;width:194px;height:10px;background:rgba(115,191,105,0.18)"></div><div class="c" style="left:998px;top:306px;width:194px;height:10px;background:rgba(115,191,105,0.18)"></div><div class="c" style="left:998px;top:318px;width:194px;height:10px;background:rgba(115,191,105,0.18)"></div><div class="c" style="left:998px;top:330px;width:194px;height:10px;background:radial-gradient(rgba(115,191,105,0.95) 10%,rgba(115,191,105,0.55))"></div><div class="c" style="left:998px;top:342px;width:194px;height:10px;background:radial-gradient(rgba(115,191,105,0.95) 10%,rgba(115,191,105,0.55))"></div><div class="c" style="left:998px;top:354px;width:194px;height:10px;background:radial-gradient(rgba(115,191,105,0.95) 10%,rgba(115,191,105,0.55))"></div><div class="c" style="left:998px;top:366px;width:194px;height:10px;background:radial-gradient(rgba(115,191,105,0.95) 10%,rgba(115,191,105,0.55))"></div><div class="c" style="left:998px;top:378px;width:194px;height:10px;background:radial-gradient(rgba(115,191,105,0.95) 10%,rgba(115,191,105,0.55))"></div><div class="c" style="left:998px;top:390px;width:194px;height:10px;background:radial-gradient(rgba(115,191,105,0.95) 10%,rgba(115,191,105,0.55))"></div><div class="c" style="left:998px;top:402px;width:194px;height:10px;background:radial-gradient(rgba(115,191,105,0.95) 10%,rgba(115,191,105,0.55))"></div><div class="c" style="left:998px;top:414px;width:194px;height:10px;background:radial-gradient(rgba(115,191,105,0.95) 10%,rgba(115,191,105,0.55))"></div><div class="c" style="left:998px;top:426px;width:194px;height:10px;background:radial-gradient(rgba(115,191,105,0.95) 10%,rgba(115,191,105,0.55))"></div><div class="c" style="left:998px;top:438px;width:194px;height:10px;background:radial-gradient(rgba(115,191,105,0.95) 10%,rgba(115,191,105,0.55))"></div><div class="c" style="left:998px;top:450px;width:194px;height:10px;background:radial-gradient(rgba(115,191,105,0.95) 10%,rgba(115,191,105,0.55))"></div><div class="c" style="left:998px;top:462px;width:194px;height:10px;background:radial-gradient(rgba(115,191,105,0.95) 10%,rgba(115,191,105,0.55))"></div><div class="c" style="left:998px;top:474px;width:194px;height:10px;background:radial-gradient(rgba(115,191,105,0.95) 10%,rgba(115,191,105,0.55))"></div><div class="c" style="left:998px;top:486px;width:194px;height:10px;background:radial-gradient(rgba(115,191,105,0.95) 10%,rgba(115,191,105,0.55))"></div>
<span class="t" id="t28" style="left:1016.96px;top:497px;font-size:14.49px;color:rgb(204,204,220);letter-spacing:0.475px;-webkit-text-stroke:0.15px rgb(204,204,220);">clab-srexperts-spine12</span>
<span class="t" id="t29" style="left:1281.16px;top:192.6px;font-size:35.64px;color:#73bf69;letter-spacing:1.426px;-webkit-text-stroke:0.15px #73bf69;">8</span>
<div class="c" style="left:1194px;top:222px;width:194px;height:10px;background:radial-gradient(rgba(115,191,105,0.95) 10%,rgba(115,191,105,0.55))"></div><div class="c" style="left:1194px;top:234px;width:194px;height:10px;background:radial-gradient(rgba(115,191,105,0.95) 10%,rgba(115,191,105,0.55))"></div><div class="c" style="left:1194px;top:246px;width:194px;height:10px;background:radial-gradient(rgba(115,191,105,0.95) 10%,rgba(115,191,105,0.55))"></div><div class="c" style="left:1194px;top:258px;width:194px;height:10px;background:radial-gradient(rgba(115,191,105,0.95) 10%,rgba(115,191,105,0.55))"></div><div class="c" style="left:1194px;top:270px;width:194px;height:10px;background:radial-gradient(rgba(115,191,105,0.95) 10%,rgba(115,191,105,0.55))"></div><div class="c" style="left:1194px;top:282px;width:194px;height:10px;background:radial-gradient(rgba(115,191,105,0.95) 10%,rgba(115,191,105,0.55))"></div><div class="c" style="left:1194px;top:294px;width:194px;height:10px;background:radial-gradient(rgba(115,191,105,0.95) 10%,rgba(115,191,105,0.55))"></div><div class="c" style="left:1194px;top:306px;width:194px;height:10px;background:radial-gradient(rgba(115,191,105,0.95) 10%,rgba(115,191,105,0.55))"></div><div class="c" style="left:1194px;top:318px;width:194px;height:10px;background:radial-gradient(rgba(115,191,105,0.95) 10%,rgba(115,191,105,0.55))"></div><div class="c" style="left:1194px;top:330px;width:194px;height:10px;background:radial-gradient(rgba(115,191,105,0.95) 10%,rgba(115,191,105,0.55))"></div><div class="c" style="left:1194px;top:342px;width:194px;height:10px;background:radial-gradient(rgba(115,191,105,0.95) 10%,rgba(115,191,105,0.55))"></div><div class="c" style="left:1194px;top:354px;width:194px;height:10px;background:radial-gradient(rgba(115,191,105,0.95) 10%,rgba(115,191,105,0.55))"></div><div class="c" style="left:1194px;top:366px;width:194px;height:10px;background:radial-gradient(rgba(115,191,105,0.95) 10%,rgba(115,191,105,0.55))"></div><div class="c" style="left:1194px;top:378px;width:194px;height:10px;background:radial-gradient(rgba(115,191,105,0.95) 10%,rgba(115,191,105,0.55))"></div><div class="c" style="left:1194px;top:390px;width:194px;height:10px;background:radial-gradient(rgba(115,191,105,0.95) 10%,rgba(115,191,105,0.55))"></div><div class="c" style="left:1194px;top:402px;width:194px;height:10px;background:radial-gradient(rgba(115,191,105,0.95) 10%,rgba(115,191,105,0.55))"></div><div class="c" style="left:1194px;top:414px;width:194px;height:10px;background:radial-gradient(rgba(115,191,105,0.95) 10%,rgba(115,191,105,0.55))"></div><div class="c" style="left:1194px;top:426px;width:194px;height:10px;background:radial-gradient(rgba(115,191,105,0.95) 10%,rgba(115,191,105,0.55))"></div><div class="c" style="left:1194px;top:438px;width:194px;height:10px;background:radial-gradient(rgba(115,191,105,0.95) 10%,rgba(115,191,105,0.55))"></div><div class="c" style="left:1194px;top:450px;width:194px;height:10px;background:radial-gradient(rgba(115,191,105,0.95) 10%,rgba(115,191,105,0.55))"></div><div class="c" style="left:1194px;top:462px;width:194px;height:10px;background:radial-gradient(rgba(115,191,105,0.95) 10%,rgba(115,191,105,0.55))"></div><div class="c" style="left:1194px;top:474px;width:194px;height:10px;background:radial-gradient(rgba(115,191,105,0.95) 10%,rgba(115,191,105,0.55))"></div><div class="c" style="left:1194px;top:486px;width:194px;height:10px;background:radial-gradient(rgba(115,191,105,0.95) 10%,rgba(115,191,105,0.55))"></div>
<span class="t" id="t30" style="left:1225.57px;top:497px;font-size:14.49px;color:rgb(204,204,220);letter-spacing:0.415px;-webkit-text-stroke:0.15px rgb(204,204,220);">clab-srexperts-vRR</span>
<div class="b" style="left:603px;top:533px;width:200px;height:4px;background:rgba(204,204,220,0.12);border-radius:2px;"></div>
<div class="b" style="left:1403px;top:427px;width:4px;height:200px;background:rgba(204,204,220,0.12);border-radius:2px;"></div>
<svg class="i" style="left:27px;top:559.6px" width="14" height="14" viewBox="0 0 24 24" fill="none" stroke="rgb(204,204,220)" stroke-width="2" stroke-linecap="round" stroke-linejoin="round"><ellipse cx="12" cy="6" rx="8" ry="3.5"/><path d="M4 6v12c0 1.9 3.6 3.5 8 3.5s8-1.6 8-3.5V6"/><path d="M4 12c0 1.9 3.6 3.5 8 3.5s8-1.6 8-3.5"/></svg>
<span class="t" id="t31" style="left:50.4px;top:556px;font-size:14.49px;color:rgb(204,204,220);letter-spacing:0.062px;-webkit-text-stroke:0.45px rgb(204,204,220);">Query</span>
<div class="b" style="left:99px;top:557px;width:22px;height:19px;background:rgba(204,204,220,0.14);border-radius:9.5px;"></div>
<span class="t" id="t32" style="left:106.55px;top:556.8px;font-size:12.42px;color:rgb(204,204,220);letter-spacing:0.497px;-webkit-text-stroke:0.15px rgb(204,204,220);">1</span>
<svg class="i" style="left:153.55px;top:559.75px" width="14.5" height="14.5" viewBox="0 0 24 24" fill="none" stroke="rgba(204,204,220,0.65)" stroke-width="2" stroke-linecap="round" stroke-linejoin="round"><path d="M3 8.500V3h5.500M3 3l5.500 5.500"/><path d="M21 15.500V21h-5.500M21 21l-5.500-5.500"/><path d="M15.500 3H21v5.500M21 3l-5.500 5.500" /><path d="M8.500 21H3v-5.500M3 21l5.500-5.500"/></svg>
<span class="t" id="t33" style="left:177.6px;top:556px;font-size:14.49px;color:rgba(204,204,220,0.65);letter-spacing:0.302px;-webkit-text-stroke:0.15px rgba(204,204,220,0.65);">Transform data</span>
<div class="b" style="left:288px;top:557px;width:24px;height:19px;background:rgba(204,204,220,0.14);border-radius:9.5px;"></div>
<span class="t" id="t34" style="left:296.55px;top:556.8px;font-size:12.42px;color:rgb(204,204,220);letter-spacing:0.497px;-webkit-text-stroke:0.15px rgb(204,204,220);">0</span>
<div class="b" style="left:-2px;top:585px;width:1399px;height:310px;background:#181b1f;border:1px solid rgba(204,204,220,0.12);"></div>
<div class="b" style="left:10px;top:581px;width:127px;height:4px;border-radius:2px;background:linear-gradient(90deg,#ff8833,#f55f3e);"></div>
<div class="b" style="left:10px;top:602px;width:87px;height:32px;background:#22252b;border-radius:2px;"></div>
<span class="t" id="t35" style="left:18.4px;top:608px;font-size:12.42px;color:rgb(204,204,220);letter-spacing:0.311px;-webkit-text-stroke:0.45px rgb(204,204,220);">Data source</span>
<div class="b" style="left:101px;top:602px;width:261px;height:32px;background:#111217;border:1px solid rgba(204,204,220,0.20);border-radius:2px;"></div>
<svg class="i" style="left:108.9px;top:608px" width="20.2" height="20.2" viewBox="0 0 115 115"><path fill="#e6522c" fill-rule="evenodd" d="M57.5 0C25.7 0 0 25.7 0 57.5S25.7 115 57.5 115 115 89.3 115 57.5 89.3 0 57.5 0zm0 107.600c-9 0-16.300-6-16.300-13.500h32.700c0 7.500-7.300 13.500-16.400 13.500zm27-17.900H30.500v-9.800h54v9.800zm-.2-14.800H30.700c-.2-.2-.4-.4-.5-.6-5.500-6.700-6.800-10.200-8.100-13.800 0-.1 6.700 1.400 11.500 2.500 0 0 2.500.6 6.100 1.200-3.500-4-5.500-9.200-5.500-14.500 0-11.600 8.900-21.700 5.700-29.900 3.100.3 6.500 6.600 6.700 16.500 3.300-4.600 4.700-13 4.700-18.200 0-5.300 3.500-11.500 7-11.700-3.100 5.200.8 9.600 4.300 20.600 1.300 4.100 1.200 11.100 2.200 15.500.3-9.200 1.900-22.500 7.700-27.200-2.600 5.900.4 13.200 2.400 16.700 3.300 5.700 5.200 10 5.200 18.100 0 5.500-2 10.600-5.400 14.600 3.900-.7 6.500-1.400 6.500-1.400l12.500-2.400c.1 0-1.800 3.700-8.700 13.900z"/></svg>
<span class="t" id="t36" style="left:134.4px;top:608px;font-size:14.49px;color:rgb(204,204,220);letter-spacing:0.066px;-webkit-text-stroke:0.15px rgb(204,204,220);">Prometheus</span>
<svg class="i" style="left:338.8px;top:611.5px" width="14" height="14" viewBox="0 0 24 24" fill="none" stroke="rgb(204,204,220)" stroke-width="2" stroke-linecap="round" stroke-linejoin="round"><path d="M6.5 9.5L12 15l5.5-5.5"/></svg>
<div class="b" style="left:366px;top:602px;width:32px;height:32px;background:rgba(204,204,220,0.10);border:1px solid rgba(204,204,220,0.05);border-radius:2px;"></div>
<svg class="i" style="left:374px;top:610px" width="16" height="16" viewBox="0 0 24 24" fill="none" stroke="rgb(204,204,220)" stroke-width="1.8" stroke-linecap="round" stroke-linejoin="round"><circle cx="12" cy="12" r="9.6"/><path d="M9.6 9.6a2.500 2.500 0 1 1 3.600 2.200c-.8.4-1.200 1-1.200 1.900"/><path d="M12 16.800h.01" stroke-width="2.400"/></svg>
<div class="b" style="left:402px;top:602px;width:828px;height:32px;background:#22252b;border-radius:2px;"></div>
<svg class="i" style="left:411.7px;top:612px" width="12" height="12" viewBox="0 0 24 24" fill="none" stroke="rgba(204,204,220,0.65)" stroke-width="2" stroke-linecap="round" stroke-linejoin="round"><path d="M9.5 6.5L15 12l-5.500 5.500"/></svg>
<span class="t" id="t37" style="left:434.1px;top:608px;font-size:14.49px;color:#6e9fff;letter-spacing:0.434px;-webkit-text-stroke:0.45px #6e9fff;">Query options</span>
<span class="t" id="t38" style="left:550.7px;top:606.8px;font-size:12.42px;color:rgba(204,204,220,0.65);letter-spacing:0.245px;-webkit-text-stroke:0.15px rgba(204,204,220,0.65);">MD = auto = 1387</span>
<span class="t" id="t39" style="left:670.3px;top:606.8px;font-size:12.42px;color:rgba(204,204,220,0.65);letter-spacing:0.244px;-webkit-text-stroke:0.15px rgba(204,204,220,0.65);">Interval = 15s</span>
<div class="b" style="left:1234px;top:602px;width:142px;height:32px;background:rgba(204,204,220,0.10);border:1px solid rgba(204,204,220,0.05);border-radius:2px;"></div>
<span class="t" id="t40" style="left:1250.2px;top:608px;font-size:14.49px;color:rgb(204,204,220);letter-spacing:0.539px;-webkit-text-stroke:0.45px rgb(204,204,220);">Query inspector</span>
<div class="b" style="left:10px;top:666px;width:1370px;height:32px;background:#22252b;border-radius:2px;"></div>
<svg class="i" style="left:19.25px;top:675.05px" width="13.5" height="13.5" viewBox="0 0 24 24" fill="none" stroke="rgb(204,204,220)" stroke-width="2" stroke-linecap="round" stroke-linejoin="round"><path d="M6.500 9.500L12 15l5.500-5.500"/></svg>
<span class="t" id="t41" style="left:51.2px;top:672.2px;font-size:14.49px;color:#6e9fff;letter-spacing:0.580px;-webkit-text-stroke:0.45px #6e9fff;">A</span>
<span class="t" id="t42" style="left:102.9px;top:670.8px;font-size:12.42px;color:rgba(204,204,220,0.65);letter-spacing:0.277px;-webkit-text-stroke:0.15px rgba(204,204,220,0.65);font-style:italic;">(Prometheus)</span>
<svg class="i" style="left:1237.95px;top:674.45px" width="15.5" height="15.5" viewBox="0 0 24 24" fill="none" stroke="rgba(204,204,220,0.85)" stroke-width="1.9" stroke-linecap="round" stroke-linejoin="round"><circle cx="12" cy="12" r="9.600"/><path d="M9.600 9.600a2.500 2.500 0 1 1 3.600 2.200c-.8.4-1.200 1-1.200 1.900"/><path d="M12 16.800h.01" stroke-width="2.400"/></svg>
<svg class="i" style="left:1265.75px;top:673.75px" width="16.5" height="16.5" viewBox="0 0 24 24" fill="none" stroke="rgba(204,204,220,0.85)" stroke-width="1.8" stroke-linecap="round" stroke-linejoin="round"><path d="M10 3h5.500L20 7.500v9a1.500 1.500 0 0 1-1.500 1.500h-8.500A1.500 1.500 0 0 1 8.500 16.500v-12A1.500 1.500 0 0 1 10 3z"/><path d="M15 3v5h5"/><path d="M8.500 6.500H6A1.500 1.500 0 0 0 4.500 8v12A1.500 1.500 0 0 0 6 21.500h8.500A1.500 1.500 0 0 0 16 20v-2"/></svg>
<svg class="i" style="left:1293.9px;top:674.2px" width="16" height="16" viewBox="0 0 24 24" fill="none" stroke="rgba(204,204,220,0.85)" stroke-width="1.9" stroke-linecap="round" stroke-linejoin="round"><path d="M1.800 12C4 7.600 7.700 5.400 12 5.400s8 2.200 10.200 6.600c-2.200 4.400-5.900 6.600-10.200 6.600S4 16.400 1.800 12z"/><circle cx="12" cy="12" r="3.200"/></svg>
<svg class="i" style="left:1321.75px;top:673.75px" width="16.5" height="16.5" viewBox="0 0 24 24" fill="none" stroke="rgba(204,204,220,0.85)" stroke-width="1.8" stroke-linecap="round" stroke-linejoin="round"><path d="M3.500 6.500h17M9 6.500V4a1 1 0 0 1 1-1h4a1 1 0 0 1 1 1v2.500M6 6.500V20a1.500 1.500 0 0 0 1.500 1.500h9A1.500 1.500 0 0 0 18 20V6.500M10 11v6M14 11v6"/></svg>
<svg class="i" style="left:1357px;top:675.3px" width="12" height="16" viewBox="0 0 12 16"><g fill="rgba(204,204,220,0.85)"><circle cx="3" cy="2.500" r="1.400"/><circle cx="9" cy="2.500" r="1.400"/><circle cx="3" cy="8" r="1.400"/><circle cx="9" cy="8" r="1.400"/><circle cx="3" cy="13.500" r="1.400"/><circle cx="9" cy="13.500" r="1.400"/></g></svg>
<div class="b" style="left:34px;top:706px;width:139px;height:24px;background:rgba(204,204,220,0.10);border:1px solid rgba(204,204,220,0.05);border-radius:2px;"></div>
<span class="t" id="t43" style="left:42.4px;top:708px;font-size:12.42px;color:rgb(204,204,220);letter-spacing:0.446px;-webkit-text-stroke:0.45px rgb(204,204,220);">Kick start your query</span>
<span class="t" id="t44" style="left:197.2px;top:706.8px;font-size:12.42px;color:rgba(204,204,220,0.65);letter-spacing:0.049px;-webkit-text-stroke:0.15px rgba(204,204,220,0.65);">Explain</span>
<div class="b" style="left:247px;top:708px;width:32px;height:16px;background:#111217;border:1px solid rgba(204,204,220,0.20);border-radius:8px;"></div>
<div class="b" style="left:250px;top:710px;width:12px;height:12px;background:rgb(141,141,153);border-radius:6px;"></div>
<div class="b" style="left:1161px;top:706px;width:85px;height:24px;background:rgba(204,204,220,0.10);border:1px solid rgba(204,204,220,0.05);border-radius:2px;"></div>
<span class="t" id="t45" style="left:1169.2px;top:708px;font-size:12.42px;color:rgb(204,204,220);letter-spacing:0.209px;-webkit-text-stroke:0.45px rgb(204,204,220);">Run queries</span>
<div class="b" style="left:1270px;top:706px;width:110px;height:24px;border:1px solid rgba(204,204,220,0.20);border-radius:2px;"></div>
<div class="b" style="left:1273px;top:709px;width:104px;height:18px;background:#181b1f;border-radius:2px;"></div>
<span class="t" id="t46" style="left:1281.5px;top:708px;font-size:12.42px;color:rgba(204,204,220,0.65);letter-spacing:0.279px;-webkit-text-stroke:0.15px rgba(204,204,220,0.65);">Builder</span>
<div class="b" style="left:1330px;top:709px;width:47px;height:18px;background:rgba(204,204,220,0.12);border-radius:2px;"></div>
<span class="t" id="t47" style="left:1337.9px;top:708px;font-size:12.42px;color:rgb(204,204,220);letter-spacing:0.476px;-webkit-text-stroke:0.45px rgb(204,204,220);">Code</span>
<div class="b" style="left:34px;top:738px;width:127px;height:32px;background:#22252b;border-radius:2px;"></div>
<span class="t" id="t48" style="left:42.1px;top:744px;font-size:12.42px;color:#6e9fff;letter-spacing:0.532px;-webkit-text-stroke:0.45px #6e9fff;">Metrics browser</span>
<svg class="i" style="left:138px;top:748px" width="13" height="13" viewBox="0 0 24 24" fill="none" stroke="#6e9fff" stroke-width="2.4" stroke-linecap="round" stroke-linejoin="round"><path d="M9.500 6.500L15 12l-5.500 5.500"/></svg>
<div class="b" style="left:165px;top:738px;width:1215px;height:30px;background:#111217;border:1px solid rgba(204,204,220,0.20);border-radius:2px;"></div>
<span class="t" id="t49" style="left:174.5px;top:742.5px;font-size:12.8px;color:rgb(204,204,220);letter-spacing:-0.014px;-webkit-text-stroke:0.15px rgb(204,204,220);font-family:'DejaVu Sans Mono', 'Liberation Mono', monospace;">network_instance_protocols_bgp_statistics_dynamic_peers</span>
<div class="b" style="left:34px;top:774px;width:1346px;height:108px;background:#22252b;border-radius:2px;"></div>
<svg class="i" style="left:44px;top:786px" width="12" height="12" viewBox="0 0 24 24" fill="none" stroke="rgb(204,204,220)" stroke-width="2.2" stroke-linecap="round" stroke-linejoin="round"><path d="M6.500 9.500L12 15l5.500-5.500"/></svg>
<span class="t" id="t50" style="left:66.4px;top:781px;font-size:12.42px;color:rgb(204,204,220);letter-spacing:0.372px;-webkit-text-stroke:0.45px rgb(204,204,220);">Options</span>
<span class="t" id="t51" style="left:50.3px;top:810px;font-size:12.42px;color:rgb(204,204,220);letter-spacing:0.319px;-webkit-text-stroke:0.45px rgb(204,204,220);">Legend</span>
<svg class="i" style="left:102.3px;top:813.5px" width="13" height="13" viewBox="0 0 24 24" fill="none" stroke="rgba(204,204,220,0.65)" stroke-width="1.9" stroke-linecap="round" stroke-linejoin="round"><circle cx="12" cy="12" r="9.600"/><path d="M12 11v6"/><path d="M12 7.400h.01" stroke-width="2.400"/></svg>
<div class="b" style="left:50px;top:834px;width:176px;height:32px;background:#111217;border:1px solid rgba(204,204,220,0.20);border-radius:2px;"></div>
<span class="t" id="t52" style="left:59.1px;top:840px;font-size:14.49px;color:rgb(204,204,220);letter-spacing:0.219px;-webkit-text-stroke:0.15px rgb(204,204,220);">{{source}}</span>
<span class="t" id="t53" style="left:242.2px;top:810px;font-size:12.42px;color:rgb(204,204,220);letter-spacing:0.473px;-webkit-text-stroke:0.45px rgb(204,204,220);">Min step</span>
<svg class="i" style="left:301.3px;top:813.5px" width="13" height="13" viewBox="0 0 24 24" fill="none" stroke="rgba(204,204,220,0.65)" stroke-width="1.9" stroke-linecap="round" stroke-linejoin="round"><circle cx="12" cy="12" r="9.600"/><path d="M12 11v6"/><path d="M12 7.400h.01" stroke-width="2.400"/></svg>
<div class="b" style="left:242px;top:834px;width:80px;height:32px;background:#111217;border:1px solid rgba(204,204,220,0.20);border-radius:2px;"></div>
<span class="t" id="t54" style="left:251.3px;top:840px;font-size:14.49px;color:rgba(204,204,220,0.6);letter-spacing:0.099px;-webkit-text-stroke:0.15px rgba(204,204,220,0.6);">auto</span>
<span class="t" id="t55" style="left:338.3px;top:810px;font-size:12.42px;color:rgb(204,204,220);letter-spacing:0.221px;-webkit-text-stroke:0.45px rgb(204,204,220);">Format</span>
<div class="b" style="left:338px;top:834px;width:120px;height:32px;background:#111217;border:1px solid rgba(204,204,220,0.20);border-radius:2px;"></div>
<span class="t" id="t56" style="left:347.4px;top:840px;font-size:14.49px;color:rgb(204,204,220);letter-spacing:0.239px;-webkit-text-stroke:0.15px rgb(204,204,220);">Time series</span>
<svg class="i" style="left:434.7px;top:844.5px" width="12" height="12" viewBox="0 0 24 24" fill="none" stroke="rgb(204,204,220)" stroke-width="2.2" stroke-linecap="round" stroke-linejoin="round"><path d="M6.500 9.500L12 15l5.500-5.500"/></svg>
<span class="t" id="t57" style="left:474.6px;top:810px;font-size:12.42px;color:rgb(204,204,220);letter-spacing:0.298px;-webkit-text-stroke:0.45px rgb(204,204,220);">Type</span>
<div class="b" style="left:474px;top:834px;width:223px;height:32px;border:1px solid rgba(204,204,220,0.20);border-radius:2px;"></div>
<div class="b" style="left:477px;top:837px;width:217px;height:26px;background:#181b1f;border-radius:2px;"></div>
<div class="b" style="left:477px;top:837px;width:75px;height:26px;background:rgba(204,204,220,0.12);border-radius:2px;"></div>
<span class="t" id="t58" style="left:493.3px;top:840px;font-size:14.49px;color:rgb(204,204,220);letter-spacing:-0.197px;-webkit-text-stroke:0.45px rgb(204,204,220);">Range</span>
<span class="t" id="t59" style="left:568px;top:840px;font-size:14.49px;color:rgba(204,204,220,0.65);letter-spacing:0.403px;-webkit-text-stroke:0.15px rgba(204,204,220,0.65);">Instant</span>
<span class="t" id="t60" style="left:646.7px;top:840px;font-size:14.49px;color:rgba(204,204,220,0.65);letter-spacing:0.301px;-webkit-text-stroke:0.15px rgba(204,204,220,0.65);">Both</span>
<span class="t" id="t61" style="left:713px;top:810px;font-size:12.42px;color:rgb(204,204,220);letter-spacing:0.211px;-webkit-text-stroke:0.45px rgb(204,204,220);">Exemplars</span>
<div class="b" style="left:713px;top:841px;width:32px;height:16px;background:#111217;border:1px solid rgba(204,204,220,0.20);border-radius:8px;"></div>
<div class="b" style="left:716px;top:843px;width:12px;height:12px;background:rgb(141,141,153);border-radius:6px;"></div>
<div class="b" style="left:1413px;top:142px;width:500px;height:760px;background:#181b1f;border:1px solid rgba(204,204,220,0.12);border-radius:2px;"></div>
<div class="b" style="left:1422px;top:151px;width:475px;height:32px;background:#111217;border:1px solid rgba(204,204,220,0.20);border-radius:2px;"></div>
<svg class="i" style="left:1429.4px;top:159px" width="16" height="16" viewBox="0 0 24 24" fill="none" stroke="rgba(204,204,220,0.65)" stroke-width="1.8" stroke-linecap="round" stroke-linejoin="round"><circle cx="11" cy="11" r="7.500"/><path d="M16.500 16.500L21 21"/></svg>
<span class="t" id="t62" style="left:1451.3px;top:157.5px;font-size:14.49px;color:rgba(204,204,220,0.6);letter-spacing:0.137px;-webkit-text-stroke:0.15px rgba(204,204,220,0.6);">Search options</span>
<div class="b" style="left:1422px;top:191px;width:475px;height:32px;border:1px solid rgba(204,204,220,0.20);border-radius:2px;"></div>
<div class="b" style="left:1425px;top:194px;width:235px;height:26px;background:rgba(204,204,220,0.12);border-radius:2px;"></div>
<span class="t" id="t63" style="left:1534.05px;top:197px;font-size:14.49px;color:rgb(204,204,220);letter-spacing:0.195px;-webkit-text-stroke:0.45px rgb(204,204,220);">All</span>
<span class="t" id="t64" style="left:1744.45px;top:197px;font-size:14.49px;color:rgba(204,204,220,0.65);letter-spacing:0.263px;-webkit-text-stroke:0.15px rgba(204,204,220,0.65);">Overrides</span>
<div class="b" style="left:1414px;top:239px;width:500px;height:1px;background:rgba(204,204,220,0.12);"></div>
<svg class="i" style="left:1423.5px;top:251px" width="11" height="11" viewBox="0 0 24 24" fill="none" stroke="rgb(204,204,220)" stroke-width="2.2" stroke-linecap="round" stroke-linejoin="round"><path d="M6.500 9.500L12 15l5.500-5.500"/></svg>
<span class="t" id="t65" style="left:1446.5px;top:247.4px;font-size:14.49px;color:rgb(204,204,220);letter-spacing:0.327px;-webkit-text-stroke:0.45px rgb(204,204,220);">Panel options</span>
<span class="t" id="t66" style="left:1446.5px;top:277.8px;font-size:12.42px;color:rgb(204,204,220);letter-spacing:0.604px;-webkit-text-stroke:0.45px rgb(204,204,220);">Title</span>
<div class="b" style="left:1446px;top:299px;width:443px;height:32px;background:#111217;border:1px solid rgba(204,204,220,0.20);border-radius:2px;"></div>
<span class="t" id="t67" style="left:1455.2px;top:306px;font-size:14.49px;color:rgb(204,204,220);letter-spacing:-0.196px;-webkit-text-stroke:0.15px rgb(204,204,220);">SRL Dynamic BGP Peers</span>
<span class="t" id="t68" style="left:1446.5px;top:344.6px;font-size:12.42px;color:rgb(204,204,220);letter-spacing:0.454px;-webkit-text-stroke:0.45px rgb(204,204,220);">Description</span>
<div class="b" style="left:1446px;top:366px;width:443px;height:50px;background:#111217;border:1px solid rgba(204,204,220,0.20);border-radius:2px;"></div>
<svg class="i" style="left:1879px;top:406px" width="8" height="8" viewBox="0 0 8 8"><path d="M7.500 1L1 7.500M7.500 4.500L4.500 7.500" stroke="rgba(204,204,220,0.75)" stroke-width="1" fill="none"/></svg>
<span class="t" id="t69" style="left:1446.5px;top:430px;font-size:12.42px;color:rgb(204,204,220);letter-spacing:0.394px;-webkit-text-stroke:0.45px rgb(204,204,220);">Transparent background</span>
<div class="b" style="left:1446px;top:451px;width:32px;height:16px;background:#111217;border:1px solid rgba(204,204,220,0.20);border-radius:8px;"></div>
<div class="b" style="left:1449px;top:453px;width:12px;height:12px;background:rgb(141,141,153);border-radius:6px;"></div>
<div class="b" style="left:1446px;top:483px;width:443px;height:1px;background:rgba(204,204,220,0.12);"></div>
<svg class="i" style="left:1451.1px;top:494.5px" width="11" height="11" viewBox="0 0 24 24" fill="none" stroke="rgb(204,204,220)" stroke-width="2.2" stroke-linecap="round" stroke-linejoin="round"><path d="M9.500 6.500L15 12l-5.500 5.500"/></svg>
<span class="t" id="t70" style="left:1474.4px;top:491px;font-size:14.49px;color:rgb(204,204,220);letter-spacing:0.215px;-webkit-text-stroke:0.45px rgb(204,204,220);">Panel links</span>
<div class="b" style="left:1446px;top:516px;width:443px;height:1px;background:rgba(204,204,220,0.12);"></div>
<svg class="i" style="left:1451.1px;top:527.5px" width="11" height="11" viewBox="0 0 24 24" fill="none" stroke="rgb(204,204,220)" stroke-width="2.2" stroke-linecap="round" stroke-linejoin="round"><path d="M9.500 6.500L15 12l-5.500 5.500"/></svg>
<span class="t" id="t71" style="left:1474.4px;top:524px;font-size:14.49px;color:rgb(204,204,220);letter-spacing:0.366px;-webkit-text-stroke:0.45px rgb(204,204,220);">Repeat options</span>
<div class="b" style="left:1414px;top:557px;width:500px;height:1px;background:rgba(204,204,220,0.12);"></div>
<svg class="i" style="left:1423.5px;top:568.5px" width="11" height="11" viewBox="0 0 24 24" fill="none" stroke="rgb(204,204,220)" stroke-width="2.2" stroke-linecap="round" stroke-linejoin="round"><path d="M9.500 6.500L15 12l-5.500 5.500"/></svg>
<span class="t" id="t72" style="left:1446.5px;top:565.2px;font-size:14.49px;color:rgb(204,204,220);letter-spacing:0.416px;-webkit-text-stroke:0.45px rgb(204,204,220);">Value options</span>
<div class="b" style="left:1414px;top:590px;width:500px;height:1px;background:rgba(204,204,220,0.12);"></div>
<svg class="i" style="left:1423.5px;top:601.9px" width="11" height="11" viewBox="0 0 24 24" fill="none" stroke="rgb(204,204,220)" stroke-width="2.2" stroke-linecap="round" stroke-linejoin="round"><path d="M6.500 9.500L12 15l5.500-5.500"/></svg>
<span class="t" id="t73" style="left:1446.5px;top:598.3px;font-size:14.49px;color:rgb(204,204,220);letter-spacing:0.207px;-webkit-text-stroke:0.45px rgb(204,204,220);">Bar gauge</span>
<span class="t" id="t74" style="left:1446.5px;top:628.8px;font-size:12.42px;color:rgb(204,204,220);letter-spacing:0.421px;-webkit-text-stroke:0.45px rgb(204,204,220);">Orientation</span>
<span class="t" id="t75" style="left:1446.5px;top:646px;font-size:12.42px;color:rgba(204,204,220,0.65);letter-spacing:0.339px;-webkit-text-stroke:0.15px rgba(204,204,220,0.65);">Layout orientation</span>
<div class="b" style="left:1446px;top:667px;width:254px;height:32px;border:1px solid rgba(204,204,220,0.20);border-radius:2px;"></div>
<div class="b" style="left:1449px;top:670px;width:64px;height:26px;background:rgba(204,204,220,0.12);border-radius:2px;"></div>
<span class="t" id="t76" style="left:1465.4px;top:673px;font-size:14.49px;color:rgb(204,204,220);letter-spacing:0.601px;-webkit-text-stroke:0.45px rgb(204,204,220);">Auto</span>
<span class="t" id="t77" style="left:1529.4px;top:673px;font-size:14.49px;color:rgba(204,204,220,0.65);letter-spacing:0.409px;-webkit-text-stroke:0.15px rgba(204,204,220,0.65);">Horizontal</span>
<span class="t" id="t78" style="left:1630.7px;top:673px;font-size:14.49px;color:rgba(204,204,220,0.65);letter-spacing:0.429px;-webkit-text-stroke:0.15px rgba(204,204,220,0.65);">Vertical</span>
<span class="t" id="t79" style="left:1446.3px;top:713px;font-size:12.42px;color:rgb(204,204,220);letter-spacing:0.303px;-webkit-text-stroke:0.45px rgb(204,204,220);">Display mode</span>
<div class="b" style="left:1446px;top:734px;width:265px;height:32px;border:1px solid rgba(204,204,220,0.20);border-radius:2px;"></div>
<span class="t" id="t80" style="left:1465.2px;top:740px;font-size:14.49px;color:rgba(204,204,220,0.65);letter-spacing:0.291px;-webkit-text-stroke:0.15px rgba(204,204,220,0.65);">Gradient</span>
<div class="b" style="left:1539px;top:737px;width:101px;height:26px;background:rgba(204,204,220,0.12);border-radius:2px;"></div>
<span class="t" id="t81" style="left:1555.5px;top:740px;font-size:14.49px;color:rgb(204,204,220);letter-spacing:-0.015px;-webkit-text-stroke:0.45px rgb(204,204,220);">Retro LCD</span>
<span class="t" id="t82" style="left:1656.2px;top:740px;font-size:14.49px;color:rgba(204,204,220,0.65);letter-spacing:0.120px;-webkit-text-stroke:0.15px rgba(204,204,220,0.65);">Basic</span>
<span class="t" id="t83" style="left:1446.3px;top:780px;font-size:12.42px;color:rgb(204,204,220);letter-spacing:0.319px;-webkit-text-stroke:0.45px rgb(204,204,220);">Value display</span>
<div class="b" style="left:1446px;top:801px;width:293px;height:32px;border:1px solid rgba(204,204,220,0.20);border-radius:2px;"></div>
<div class="b" style="left:1449px;top:804px;width:108px;height:26px;background:rgba(204,204,220,0.12);border-radius:2px;"></div>
<span class="t" id="t84" style="left:1465.5px;top:807px;font-size:14.49px;color:rgb(204,204,220);letter-spacing:0.371px;-webkit-text-stroke:0.45px rgb(204,204,220);">Value color</span>
<span class="t" id="t85" style="left:1574.1px;top:807px;font-size:14.49px;color:rgba(204,204,220,0.65);letter-spacing:0.402px;-webkit-text-stroke:0.15px rgba(204,204,220,0.65);">Text color</span>
<span class="t" id="t86" style="left:1672.2px;top:807px;font-size:14.49px;color:rgba(204,204,220,0.65);letter-spacing:0.399px;-webkit-text-stroke:0.15px rgba(204,204,220,0.65);">Hidden</span>
<span class="t" id="t87" style="left:1446.3px;top:847px;font-size:12.42px;color:rgb(204,204,220);letter-spacing:0.355px;-webkit-text-stroke:0.45px rgb(204,204,220);">Name placement</span>
<div class="b" style="left:1446px;top:868px;width:186px;height:32px;border:1px solid rgba(204,204,220,0.20);border-radius:2px;"></div>
<div class="b" style="left:1449px;top:871px;width:64px;height:26px;background:rgba(204,204,220,0.12);border-radius:2px;"></div>
<span class="t" id="t88" style="left:1465.5px;top:874px;font-size:14.49px;color:rgb(204,204,220);letter-spacing:0.601px;-webkit-text-stroke:0.45px rgb(204,204,220);">Auto</span>
<span class="t" id="t89" style="left:1530.1px;top:874px;font-size:14.49px;color:rgba(204,204,220,0.65);letter-spacing:0.370px;-webkit-text-stroke:0.15px rgba(204,204,220,0.65);">Top</span>
<span class="t" id="t90" style="left:1586.7px;top:874px;font-size:14.49px;color:rgba(204,204,220,0.65);letter-spacing:0.743px;-webkit-text-stroke:0.15px rgba(204,204,220,0.65);">Left</span>
</body></html>
